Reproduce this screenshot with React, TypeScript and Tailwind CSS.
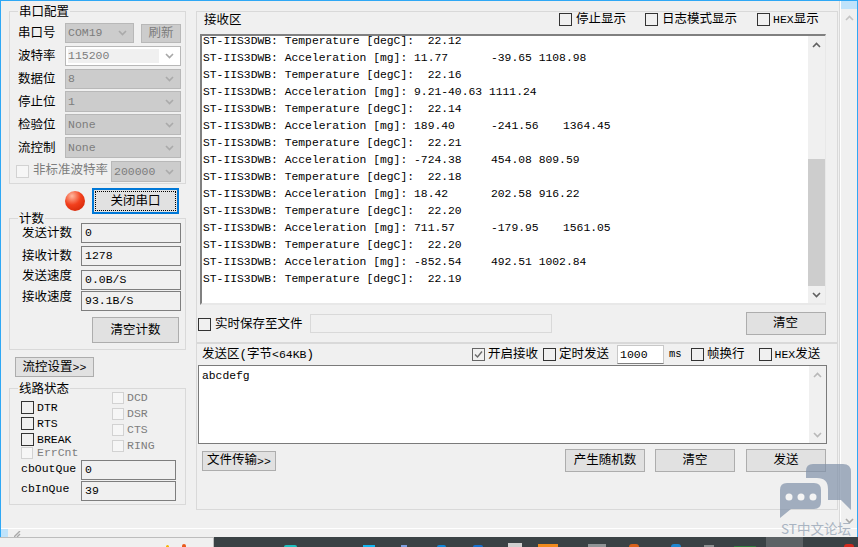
import React from "react";

const ui = "font-['Liberation_Mono','Noto_Sans_CJK_SC',monospace] text-[12.5px] leading-none";

// receive window contents, tabs are real, the terminal had them too
const lines = [
  "ST-IIS3DWB: Temperature [degC]:  22.12",
  "ST-IIS3DWB: Acceleration [mg]: 11.77\t-39.65 1108.98",
  "ST-IIS3DWB: Temperature [degC]:  22.16",
  "ST-IIS3DWB: Acceleration [mg]: 9.21-40.63 1111.24",
  "ST-IIS3DWB: Temperature [degC]:  22.14",
  "ST-IIS3DWB: Acceleration [mg]: 189.40\t-241.56\t1364.45",
  "ST-IIS3DWB: Temperature [degC]:  22.21",
  "ST-IIS3DWB: Acceleration [mg]: -724.38\t454.08 809.59",
  "ST-IIS3DWB: Temperature [degC]:  22.18",
  "ST-IIS3DWB: Acceleration [mg]: 18.42\t202.58 916.22",
  "ST-IIS3DWB: Temperature [degC]:  22.20",
  "ST-IIS3DWB: Acceleration [mg]: 711.57\t-179.95\t1561.05",
  "ST-IIS3DWB: Temperature [degC]:  22.20",
  "ST-IIS3DWB: Acceleration [mg]: -852.54\t492.51 1002.84",
  "ST-IIS3DWB: Temperature [degC]:  22.19",
];

function Chevron({ up = false, color = "#a0a0a0" }: { up?: boolean; color?: string }) {
  return (
    <svg width="9" height="6" viewBox="0 0 9 6" className="shrink-0">
      <path d={up ? "M1 5 L4.5 1.5 L8 5" : "M1 1 L4.5 4.5 L8 1"} fill="none" stroke={color} strokeWidth="1.6" />
    </svg>
  );
}

function Latin({ children }: { children: React.ReactNode }) {
  return <span className="text-[11.5px]">{children}</span>;
}

function Combo({ value, width, height = "h-[20px]", white = false }: any) {
  return (
    <div
      className={`${width} ${height} flex items-center shrink-0 border border-[#b8b8b8] ${
        white ? "bg-white p-[2px]" : "bg-[#cccccc] pl-[2px]"
      } pr-[6px]`}
    >
      <div className={`flex-1 h-full flex items-center text-[11.5px] text-[#7d7d7d] ${white ? "bg-[#f0f0f0] mr-[6px]" : ""}`}>
        {value}
      </div>
      <Chevron color={white ? "#a8a8a8" : "#aaaaaa"} />
    </div>
  );
}

function Row({ label, top, children }: any) {
  return (
    <div className={`flex items-center ${top}`}>
      <span className="w-[47px] shrink-0 pt-[3px] text-black">{label}</span>
      {children}
    </div>
  );
}

function Check({ checked = false, faint = false, size = "w-[13px] h-[13px]" }: any) {
  return (
    <span
      className={`${size} shrink-0 inline-flex items-center justify-center border ${
        faint ? "border-[#d2d2d2] bg-[#f6f6f6]" : "border-[#333333] bg-transparent"
      } ${checked ? "border-[#666666]" : ""}`}
    >
      {checked && (
        <svg width="11" height="11" viewBox="0 0 11 11">
          <path d="M2 5.5 L4.5 8 L9 2.5" fill="none" stroke="#6a6a6a" strokeWidth="1.4" />
        </svg>
      )}
    </span>
  );
}

function Btn({ children, className = "" }: any) {
  return (
    <div className={`flex items-center justify-center shrink-0 pt-[2px] bg-[#e1e1e1] border border-[#adadad] text-black ${className}`}>
      {children}
    </div>
  );
}

function Field({ value, width = "w-[100px]", top = "" }: any) {
  return (
    <div className={`${width} ${top} h-[20px] flex items-center pl-[3px] shrink-0 border border-[#7e7e7e] bg-[#f0f0f0] text-[11.5px] text-black`}>
      {value}
    </div>
  );
}

function Group({ title, className = "", titleClass = "left-[8px]", children }: any) {
  return (
    <div className={`relative border border-[#d9d9d9] ${className}`}>
      <span className={`absolute -top-[5px] bg-[#f0f0f0] px-[1px] text-black ${titleClass}`}>{title}</span>
      {children}
    </div>
  );
}

function LeftColumn() {
  return (
    <div className="w-[195px] shrink-0 pl-[8px] pt-[10px]">
      <Group title="串口配置" className="w-[177px] h-[173px] pl-[8px] pt-[11px]">
        <Row label="串口号">
          <Combo value="COM19" width="w-[69px]" />
          <Btn className="ml-[7px] w-[40px] h-[19px] !bg-[#cccccc] !text-[#7d7d7d] !border-[#b8b8b8]">刷新</Btn>
        </Row>
        <Row label="波特率" top="mt-[3px]">
          <Combo value="115200" width="w-[116px]" white />
        </Row>
        <Row label="数据位" top="mt-[3px]">
          <Combo value="8" width="w-[116px]" />
        </Row>
        <Row label="停止位" top="mt-[2px]">
          <Combo value="1" width="w-[116px]" height="h-[21px]" />
        </Row>
        <Row label="检验位" top="mt-[2px]">
          <Combo value="None" width="w-[116px]" height="h-[21px]" />
        </Row>
        <Row label="流控制" top="mt-[2px]">
          <Combo value="None" width="w-[116px]" height="h-[21px]" />
        </Row>
        <div className="flex items-center mt-[3px] -ml-[2px]">
          <Check faint />
          <span className="ml-[4px] w-[78px] shrink-0 text-[#7d7d7d]">非标准波特率</span>
          <Combo value="200000" width="w-[70px]" height="h-[21px]" />
        </div>
      </Group>

      <div className="flex items-center mt-[4px] h-[26px] pl-[56px]">
        <div className="w-[20px] h-[20px] rounded-full bg-[radial-gradient(circle_at_35%_25%,#ffb9a0_0%,#f2401d_45%,#c91e00_100%)]" />
        <div className="ml-[7px] w-[87px] h-[26px] border-2 border-[#0078d7] bg-[#e1e1e1] p-[1px]">
          <div className="w-full h-full flex items-center justify-center pt-[2px] border border-dotted border-black text-black">关闭串口</div>
        </div>
      </div>

      <Group title="计数" className="mt-[4px] w-[177px] h-[132px] pl-[12px] pt-[4px]">
        <div className="flex items-center">
          <span className="w-[59px] shrink-0 pt-[3px]">发送计数</span>
          <Field value="0" />
        </div>
        <div className="flex items-center mt-[3px]">
          <span className="w-[59px] shrink-0 pt-[2px]">接收计数</span>
          <Field value="1278" />
        </div>
        <div className="flex items-center mt-[4px]">
          <span className="w-[59px] shrink-0 -mt-[5px]">发送速度</span>
          <Field value="0.0B/S" />
        </div>
        <div className="flex items-center mt-[1px]">
          <span className="w-[59px] shrink-0 -mt-[5px]">接收速度</span>
          <Field value="93.1B/S" />
        </div>
        <Btn className="mt-[6px] ml-[70px] w-[87px] h-[26px]">清空计数</Btn>
      </Group>

      <Btn className="mt-[7px] ml-[6px] w-[79px] h-[20px]">
        流控设置<Latin>&gt;&gt;</Latin>
      </Btn>

      <Group title="线路状态" className="mt-[11px] w-[177px] h-[117px] pl-[11px]">
        <div className="flex h-[71px]">
          <div className="w-[91px] shrink-0 pt-[12px]">
            <div className="flex items-center h-[13px]">
              <Check />
              <span className="ml-[3px] text-[11.5px]">DTR</span>
            </div>
            <div className="flex items-center h-[13px] mt-[3px]">
              <Check />
              <span className="ml-[3px] text-[11.5px]">RTS</span>
            </div>
            <div className="flex items-center h-[13px] mt-[3px]">
              <Check />
              <span className="ml-[3px] text-[11.5px]">BREAK</span>
            </div>
            <div className="flex items-center h-[12px] mt-[1px]">
              <Check faint size="w-[12px] h-[12px]" />
              <span className="ml-[4px] text-[11.5px] text-[#7d7d7d]">ErrCnt</span>
            </div>
          </div>
          <div className="pt-[3px]">
            {["DCD", "DSR", "CTS", "RING"].map((n) => (
              <div key={n} className="flex items-center h-[12px] mb-[4px]">
                <Check faint size="w-[12px] h-[12px]" />
                <span className="ml-[3px] text-[11.5px] text-[#7d7d7d]">{n}</span>
              </div>
            ))}
          </div>
        </div>
        <div className="flex items-center">
          <span className="w-[60px] shrink-0 -mt-[2px] text-[11.5px]">cbOutQue</span>
          <Field value="0" width="w-[95px]" />
        </div>
        <div className="flex items-center mt-[1px]">
          <span className="w-[60px] shrink-0 -mt-[4px] text-[11.5px]">cbInQue</span>
          <Field value="39" width="w-[95px]" />
        </div>
      </Group>
    </div>
  );
}

function ScrollBar({ active, thumb = false }: { active: string; thumb?: boolean }) {
  return (
    <div className="w-[17px] shrink-0 h-full bg-[#f0f0f0] flex flex-col items-center justify-between">
      <div className="h-[17px] flex items-center justify-center shrink-0">
        <Chevron up color={active} />
      </div>
      {thumb && <div className="w-full h-[127px] mt-auto bg-[#cdcdcd]" />}
      <div className="h-[17px] flex items-center justify-center shrink-0">
        <Chevron color={active} />
      </div>
    </div>
  );
}

function CheckLabel({ children, className = "", checked = false, gap = "ml-[3px]" }: any) {
  return (
    <div className={`flex items-center shrink-0 ${className}`}>
      <Check checked={checked} />
      <span className={`${gap} pt-[2px]`}>{children}</span>
    </div>
  );
}

function RightColumn() {
  return (
    <div className="w-[642px] shrink-0 pt-[10px]">
      {/* receive area */}
      <div className="h-[332px] border border-[#d9d9d9] border-b-[#d9d9d9] pl-[3px] flex flex-col">
        <div className="h-[22px] shrink-0 flex items-center pl-[4px] pb-[7px]">
          <span className="w-[355px] shrink-0 pt-[3px]">接收区</span>
          <CheckLabel gap="ml-[4px]">停止显示</CheckLabel>
          <CheckLabel className="ml-[19px]" gap="ml-[4px]">日志模式显示</CheckLabel>
          <CheckLabel className="ml-[20px]">
            <Latin>HEX</Latin>显示
          </CheckLabel>
        </div>
        <div className="w-[626px] h-[271px] shrink-0 flex border-t-2 border-l-2 border-t-[#808080] border-l-[#808080] border-r border-b-2 border-r-[#e8e8e8] border-b-[#e8e8e8] bg-white overflow-hidden">
          <div className="flex-1 min-w-0 pl-[1px] overflow-hidden">
            <div className="-mt-[3px] whitespace-pre [tab-size:72px] text-[11.35px] leading-[17px] text-black">
              {lines.join("\n")}
            </div>
          </div>
          <ScrollBar active="#606060" thumb />
        </div>
        <div className="flex items-start flex-1">
          <CheckLabel className="ml-[-2px] mt-[12px]" gap="ml-[4px]">实时保存至文件</CheckLabel>
          <div className="ml-[7px] mt-[9px] w-[242px] h-[19px] border border-[#d9d9d9] bg-[#f0f0f0]" />
          <Btn className="ml-[194px] mt-[7px] w-[80px] h-[23px]">清空</Btn>
        </div>
      </div>

      {/* send area */}
      <div className="h-[167px] border border-[#d9d9d9] border-t-[#d9d9d9] pl-[1px] flex flex-col">
        <div className="h-[21px] shrink-0 flex items-center">
          <span className="ml-[4px] w-[270px] shrink-0 pt-[2px]">
            发送区(字节<Latin>&lt;64KB</Latin>)
          </span>
          <CheckLabel checked>开启接收</CheckLabel>
          <CheckLabel className="ml-[5px]">定时发送</CheckLabel>
          <div className="ml-[8px] w-[47px] h-[19px] border border-[#c8c8c8] border-b-[#808080] bg-white pl-[2px] flex items-center text-[11.5px] shrink-0">
            1000
          </div>
          <span className="ml-[5px] text-[10.5px] w-[22px] shrink-0">ms</span>
          <CheckLabel>帧换行</CheckLabel>
          <CheckLabel className="ml-[14px]">
            <Latin>HEX</Latin>发送
          </CheckLabel>
        </div>
        <div className="w-[629px] h-[79px] shrink-0 flex border border-[#7a7a7a] bg-white">
          <div className="flex-1 pl-[3px] pt-[2px] text-[11.35px] leading-[17px] text-black">abcdefg</div>
          <ScrollBar active="#b8b8b8" />
        </div>
        <div className="flex items-center mt-[5px] h-[23px]">
          <Btn className="ml-[4px] w-[74px] h-[20px]">
            文件传输<Latin>&gt;&gt;</Latin>
          </Btn>
          <Btn className="ml-[289px] w-[80px] h-[23px]">产生随机数</Btn>
          <Btn className="ml-[10px] w-[80px] h-[23px]">清空</Btn>
          <Btn className="ml-[11px] w-[80px] h-[23px]">发送</Btn>
        </div>
      </div>
    </div>
  );
}

function Taskbar() {
  return (
    <div className="h-[10px] flex shrink-0">
      <div className="w-[214px] shrink-0 border-t border-r border-[#bdbdbd] bg-[#f0f0f0] flex items-end">
        <span className="ml-[166px] w-[3px] h-[2px] rounded-t-full bg-[#f5b400]" />
        <span className="ml-[13px] w-[4px] h-[3px] rounded-t-full bg-[#ea5a1c]" />
      </div>
      <div className="flex-1 bg-[#3a4245] flex items-end">
        <span className="ml-[70px] w-[13px] h-[2px] rounded-t-full bg-[#1ec0c0]" />
        <span className="ml-[66px] w-[12px] h-[2px] bg-[#12b5f0]" />
        <span className="ml-[26px] w-[6px] h-[2px] bg-[#7d9fe0]" />
        <span className="ml-[30px] w-[9px] h-[2px] rounded-t-full bg-[#0f86d8]" />
        <span className="ml-[27px] w-[10px] h-[2px] rounded-t-full bg-[#1570d0]" />
        <span className="ml-[25px] w-[14px] h-[4px] bg-[#cfcfcf]" />
        <span className="ml-[16px] w-[20px] h-[3px] bg-[#f08a1d]" />
        <span className="ml-[30px] w-[18px] h-[3px] bg-[#8f9496]" />
        <span className="ml-[23px] w-[10px] h-[3px] rounded-t-full bg-[#d8601a]" />
        <span className="ml-[32px] w-[10px] h-[3px] rounded-t-full bg-[#1c86d0]" />
        <span className="ml-[23px] w-[10px] h-[2px] bg-[#8a8f90]" />
        <span className="ml-[20px] w-[22px] h-[1px] bg-[#2c7a3c]" />
        <div className="ml-[10px] w-[37px] h-full bg-[#5c6265] shrink-0" />
        <span className="ml-[41px] w-[10px] h-[3px] rounded-t-full bg-[#d42a1e]" />
      </div>
    </div>
  );
}

export default function App() {
  return (
    <div className={`${ui} relative w-[858px] h-[547px] overflow-hidden bg-[#f0f0f0] text-black flex flex-col`}>
      <div className="flex-1 min-h-0 flex flex-col border-t border-l border-r border-[#2fa8f5] border-l-[#2fa8f5]">
        <div className="flex-1 flex min-h-0">
          <LeftColumn />
          <RightColumn />
          <div className="ml-[1px] w-[2px] shrink-0 border-l border-[#d9d9d9] bg-white" />
          <div className="flex-1 flex flex-col items-center justify-between pb-[4px]">
            <div className="w-full h-[8px] bg-[#bfe3fb]" />
            <div className="flex-1 pt-[6px]">
              <Chevron up color="#c4c4c4" />
            </div>
            <Chevron color="#a8a8a8" />
          </div>
        </div>
        <div className="h-[1px] bg-white shrink-0" />
        <div className="h-[8px] shrink-0 flex items-end">
          <span className="w-[7px] h-full bg-[#bfe3fb]" />
          <svg width="7" height="6" viewBox="0 0 7 6" className="ml-[6px]">
            <path d="M0 6 L6 0 M3 6 L6 3" stroke="#a8a8a8" strokeWidth="1.4" />
          </svg>
        </div>
      </div>
      <Taskbar />

      {/* forum watermark sits on top of the screenshot */}
      <div className="absolute left-[778px] top-[463px] w-[76px] flex flex-col items-center">
        <svg width="74" height="57" viewBox="0 0 74 57">
          <path
            d="M27 15 V8 Q27 1 34 1 H64 Q72 1 72 9 V47 L62 37 H49 V26 Q49 15 38 15 Z"
            fill="#7f90a8"
            fillOpacity="0.7"
          />
          <path
            d="M8 20 H35 Q42 20 42 27 V39 Q42 46 35 46 H12 L1 55 V27 Q1 20 8 20 Z"
            fill="#7f90a8"
            fillOpacity="0.7"
          />
          <circle cx="10" cy="34" r="3.5" fill="#f4f4f4" />
          <circle cx="22" cy="34" r="3.5" fill="#f4f4f4" />
          <circle cx="34" cy="34" r="3.5" fill="#f4f4f4" />
        </svg>
        <span className="mt-[2px] whitespace-nowrap font-['Noto_Sans_CJK_SC',sans-serif] text-[13.5px] text-[#a9b4c2]">ST中文论坛</span>
      </div>
    </div>
  );
}
